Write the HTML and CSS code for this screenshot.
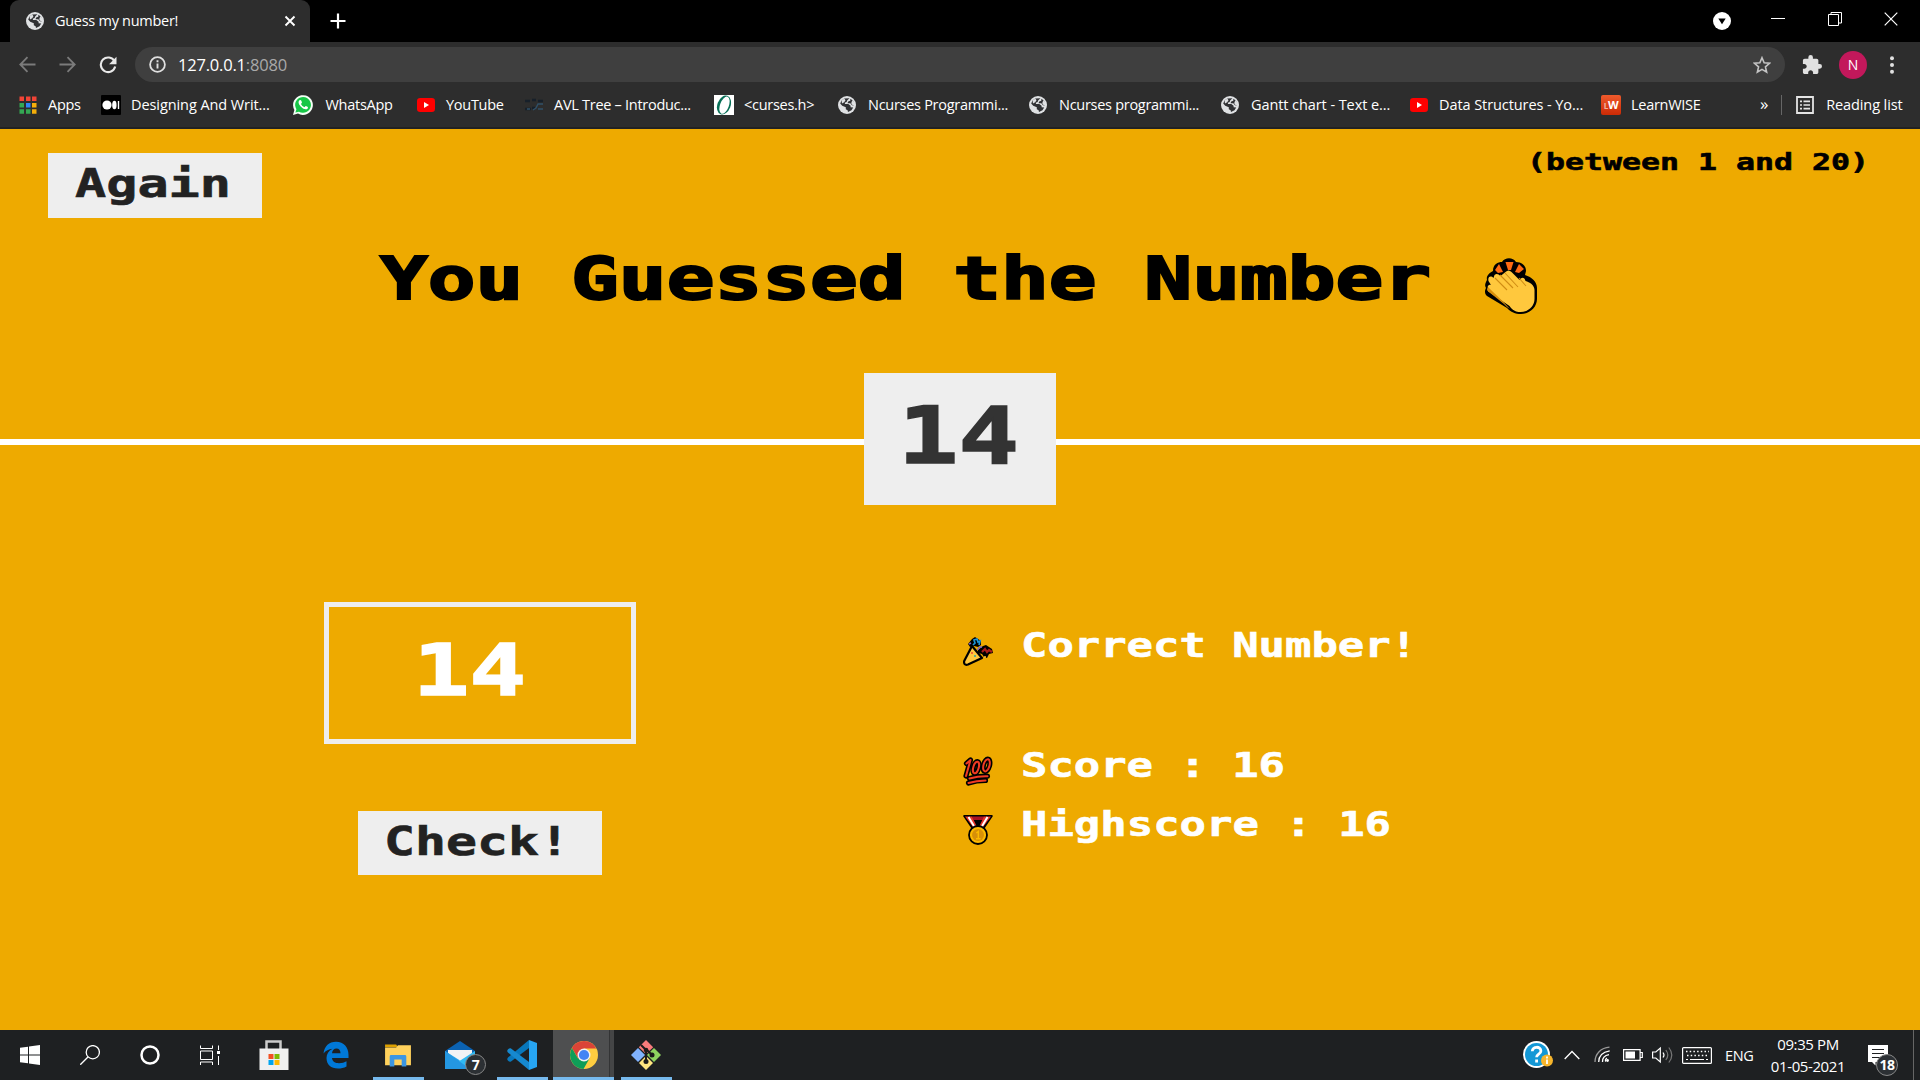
FILE: index.html
```html
<!DOCTYPE html>
<html lang="en">
<head>
<meta charset="utf-8">
<title>Guess my number!</title>
<link rel="stylesheet" href="styles.css">
</head>
<body>
<svg class="defs" width="0" height="0" aria-hidden="true">
  <symbol id="globe" viewBox="0 0 18 18"><circle cx="9" cy="9" r="9" fill="#dfe1e3"/><path d="M6.300 2.600L11.500 2.200 9.300 4.300 8.600 6 6.800 6.700 7 8H10.300L12.600 9.800V11.300L15.200 11.600 13.500 14.300 10 16 9.600 14.300 7.800 13.300V11.200L4.200 9.800 2.200 7.500 3.600 4.400z" fill="#303134"/><path d="M3.600 4.400L6.300 2.600 7.500 4.300 6.200 6.200 4 7.500z" fill="#dfe1e3"/><path d="M12.300 2.800C15 4 16.500 7 16 9.800L14 9.200 12.300 7.200H9.500L10.200 5.400 12.300 4.800z" fill="#303134"/><path d="M14.200 4.400L17 7V10L14.800 9.500 13.200 7.300z" fill="#dfe1e3"/></symbol>
  <symbol id="youtube" viewBox="0 0 20 20"><rect x="1" y="3" width="18" height="14" rx="3.200" fill="#f00"/><path d="M8 7v6l5-3z" fill="#fff"/></symbol>
</svg>

<div class="browser">
  <div class="tabstrip">
    <div class="tab">
      <svg width="18" height="18"><use href="#globe"/></svg>
      <span class="tab-title">Guess my number!</span>
      <svg class="tab-close" width="12" height="12" viewBox="0 0 12 12"><path d="M1.500 1.500l9 9M10.500 1.500l-9 9" stroke="#fff" stroke-width="1.900"/></svg>
    </div>
    <svg class="new-tab" width="16" height="16" viewBox="0 0 16 16"><path d="M8 .5v15M.5 8h15" stroke="#fff" stroke-width="2.200"/></svg>
    <div class="window-controls">
      <svg width="18" height="18" viewBox="0 0 18 18"><circle cx="9" cy="9" r="9" fill="#fff"/><path d="M5.300 6.500h7.400L9 12.200z" fill="#000"/></svg>
      <svg width="14" height="14" viewBox="0 0 14 14"><path d="M0 6.500h14" stroke="#fff"/></svg>
      <svg width="14" height="14" viewBox="0 0 14 14" fill="none" stroke="#fff"><path d="M.5 2.500h10v11H.5zM3 2.500V.5h10.500v10.500H11"/></svg>
      <svg width="14" height="14" viewBox="0 0 14 14"><path d="M.7.7l12.600 12.600M13.300.7.7 13.300" stroke="#fff" stroke-width="1.200"/></svg>
    </div>
  </div>

  <div class="toolbar">
    <svg width="17" height="17" viewBox="0 0 17 17" fill="none" stroke="#7b7b7b" stroke-width="1.800"><path d="M16.500 8.500H1.500M8.500 1.200 1.300 8.500l7.200 7.300"/></svg>
    <svg width="17" height="17" viewBox="0 0 17 17" fill="none" stroke="#7b7b7b" stroke-width="1.800"><path d="M.5 8.500h15M8.500 1.200l7.200 7.300-7.200 7.300"/></svg>
    <svg width="18" height="18" viewBox="0 0 18 18"><path d="M15.500 5.200A7.300 7.300 0 1 0 16.200 10.500" fill="none" stroke="#e8e8e8" stroke-width="2.100"/><path d="M17.500.8v7.400h-7.400z" fill="#e8e8e8"/></svg>
    <div class="omnibox">
      <svg width="17" height="17" viewBox="0 0 17 17"><circle cx="8.500" cy="8.500" r="7.400" fill="none" stroke="#e0e0e0" stroke-width="1.800"/><path d="M8.500 7.600v5M8.500 4.300v2" stroke="#e0e0e0" stroke-width="1.900"/></svg>
      <span class="address">127.0.0.1<span class="port">:8080</span></span>
      <svg class="star" width="18" height="18" viewBox="0 0 18 18"><path d="M9 1.700l2.150 5.100 5.350.45-4.050 3.600 1.200 5.350L9 13.400l-4.650 2.800 1.200-5.350L1.500 7.250l5.350-.45z" fill="none" stroke="#c4c4c4" stroke-width="1.600"/></svg>
    </div>
    <svg class="puzzle" width="20" height="20" viewBox="1 1 22 22"><path fill="#e0e0e0" d="M20.500 11H19V7c0-1.100-.9-2-2-2h-4V3.500a2.500 2.500 0 0 0-5 0V5H4c-1.100 0-1.990.9-1.990 2v3.800H3.500c1.490 0 2.700 1.210 2.700 2.700s-1.210 2.700-2.700 2.700H2V20c0 1.100.9 2 2 2h3.800v-1.500c0-1.490 1.210-2.700 2.700-2.700s2.700 1.210 2.700 2.700V22H17c1.100 0 2-.9 2-2v-4h1.500a2.500 2.500 0 0 0 0-5z"/></svg>
    <span class="avatar">N</span>
    <svg width="4" height="18" viewBox="0 0 4 18" fill="#e0e0e0"><circle cx="2" cy="2.200" r="2"/><circle cx="2" cy="9" r="2"/><circle cx="2" cy="15.800" r="2"/></svg>
  </div>

  <div class="bookmarks">
    <div class="bookmark-list">
      <div class="bookmark"><svg width="20" height="20" viewBox="0 0 20 20"><g fill="#f14436"><path d="M1.500 1.500h4.500v4.500H1.500zM8 1.500h4.500v4.500H8zM14 1.500h4.500v4.500H14z"/></g><path d="M1.500 8h4.500v4.500H1.500zM1.500 14.200h4.500v4.500H1.500zM8 14.200h4.500v4.500H8z" fill="#34a853"/><path d="M8 8h4.500v4.500H8z" fill="#2f85f7"/><path d="M14 8h4.500v4.500H14zM14 14.200h4.500v4.500H14z" fill="#f5ae0a"/></svg><span>Apps</span></div>
      <div class="bookmark wide"><svg width="20" height="20" viewBox="0 0 20 20"><rect width="20" height="20" rx="1" fill="#000"/><circle cx="6" cy="10" r="4.600" fill="#fff"/><ellipse cx="13.400" cy="10" rx="2.200" ry="4.300" fill="#fff"/><path d="M17.500 6v8" stroke="#fff" stroke-width="1.400"/></svg><span>Designing And Writ...</span></div>
      <div class="bookmark whatsapp"><svg width="20" height="20" viewBox="0 0 20 20"><path d="M0 20l1.400-5A9.900 9.900 0 1 1 5 18.600z" fill="#f4fff6"/><path d="M2.400 17.600l1-3.400A7.900 7.900 0 1 1 6 16.700z" fill="#16c746"/><path d="M6.500 5.300c-2 1.700-.4 4.600 1.800 6.800s5 3 6.400 1.300c.7-1.200.2-1.500-2-2.400l-1.300 1.200C9.700 11.500 8.800 10.500 8 9l1-1.400C8.200 5 7.700 4.800 6.500 5.300z" fill="#fff"/></svg><span>WhatsApp</span></div>
      <div class="bookmark"><svg width="20" height="20"><use href="#youtube"/></svg><span>YouTube</span></div>
      <div class="bookmark"><svg width="20" height="20" viewBox="0 0 20 20" fill="none"><path d="M1 6h5m2-1h4m2 1h5M1 14h6m1-1h3" stroke="#17202a" stroke-width="2.500"/><path d="M19 9h-5l-2 4-3 2M3 14h3M14 14h5" stroke="#305068" stroke-width="1.400"/></svg><span>AVL Tree – Introduc...</span></div>
      <div class="bookmark"><svg width="20" height="20" viewBox="0 0 20 20"><path d="M0 0h20v20H0z" fill="#fff"/><ellipse cx="10" cy="10" rx="6.600" ry="9.800" transform="rotate(20 10 10)" fill="#087057"/><ellipse cx="10.500" cy="10" rx="4.400" ry="9" transform="rotate(20 10 10)" fill="#fff"/></svg><span>&lt;curses.h&gt;</span></div>
      <div class="bookmark"><svg width="20" height="18" viewBox="0 0 20 18"><use href="#globe" width="18" height="18"/></svg><span>Ncurses Programmi...</span></div>
      <div class="bookmark"><svg width="20" height="18" viewBox="0 0 20 18"><use href="#globe" width="18" height="18"/></svg><span>Ncurses programmi...</span></div>
      <div class="bookmark wide"><svg width="20" height="18" viewBox="0 0 20 18"><use href="#globe" width="18" height="18"/></svg><span>Gantt chart - Text e...</span></div>
      <div class="bookmark wide"><svg width="20" height="20"><use href="#youtube"/></svg><span>Data Structures - Yo...</span></div>
      <div class="bookmark"><span class="lw-icon"><i>L</i>W</span><span>LearnWISE</span></div>
    </div>
    <span class="overflow">»</span>
    <div class="reading-list">
      <svg width="18" height="18" viewBox="0 0 18 18" fill="none" stroke="#e4e4e4"><path d="M1 1h16v16H1z" stroke-width="1.800"/><path d="M4 5.300h2M4 9h2M4 12.700h2M7.500 5.300H14M7.500 9H14M7.500 12.700H14" stroke-width="1.700"/></svg>
      <span>Reading list</span>
    </div>
  </div>
</div>

<div class="game">
  <header class="game-header">
    <div class="top-row">
      <div class="button again"><svg class="pixel" width="156" height="28"><text y="28" font-size="38.400" textLength="156" lengthAdjust="spacingAndGlyphs">Again</text></svg></div>
      <svg class="pixel between" width="342" height="17"><text y="17" font-size="23.300" textLength="342" lengthAdjust="spacingAndGlyphs">(between 1 and 20)</text></svg>
    </div>
    <div class="title-row">
      <svg class="pixel title" width="1051" height="44"><text y="44" font-size="59" textLength="1051" lengthAdjust="spacingAndGlyphs">You Guessed the Number</text></svg>
      <svg class="clap" width="54" height="56" viewBox="0 0 54 56"><path d="M8 13C8 6 13 4 17 4c3-5 11-5 14 0 5 0 10 3 10 9l-1 4c7 2 12 7 12 13v11c0 8-7 15-16 15-6 0-10-2-14-6L2 38c-3-3-2-6-1-8-2-3 0-6 1-8-1-4 2-7 6-9z" fill="#000"/><path d="M10 12l4-6 4 8-5 1zM20.500 4h8L26 12h-3zM39 11l-5-5-4 8 4 1z" fill="#ff6a13"/><path d="M3 30c-1-2 1-4 3-3L3.500 23c-1-4 2-6 5-3l1-3c2-2 4-1 6 1l5-4c2-2 4-2 6 0l8 8c2-3 5-3 6 1 4 1 9 4 9 9v9c0 7-6 13-14 13-5 0-8-2-11-6L4 34c-2-1-2-3-1-4z" fill="#ffc83d"/><path d="M3 29c9 9 16 15 22 22-2-1-4-3-6-5L4 34c-2-1-2-4-1-5z" fill="#d98f0a"/><path d="M10 20l12 12M15 17l13 13M20 15l13 14M34 20l7 8" fill="none" stroke="#d08d14" stroke-width="1.100"/></svg>
    </div>
    <div class="secret"><svg class="pixel" width="121" height="57"><text y="57" font-size="77.500" textLength="121" lengthAdjust="spacingAndGlyphs">14</text></svg></div>
  </header>
  <main class="game-main">
    <section class="left">
      <div class="guess"><svg class="pixel" width="113" height="52"><text y="52" font-size="70.600" textLength="113" lengthAdjust="spacingAndGlyphs">14</text></svg></div>
      <div class="button check"><svg class="pixel" width="186" height="28"><text y="28" font-size="38.400" textLength="186" lengthAdjust="spacingAndGlyphs">Check!</text></svg></div>
    </section>
    <section class="right">
      <div class="stat message">
        <svg width="30" height="30" viewBox="0 0 30 30"><path d="M9 10L1.200 25c-.6 3 1 4.500 3.800 3.400L19 22z" fill="#ffc83d" stroke="#000" stroke-width="2.200" stroke-linejoin="round"/><path d="M5 8l4-5 3-2 3 2 3 2v4l-3 2-4-1-4 1zM15 14l5-4 3-1 6 4 1 4-4 1-2 4-3-1-2-3-4-1z" fill="#000"/><path d="M10 9l2-2-1-3 3-1 1 3 2-1-1 4" fill="none" stroke="#1d95d8" stroke-width="1.700"/><path d="M19 16l3-3 2 3 2-2 3 2" fill="none" stroke="#a91c1c" stroke-width="2.200"/><path d="M6 8l2-1M15 14c0-2 2-3 4-3" stroke="#7864c8" stroke-width="1.500" fill="none"/><circle cx="9" cy="17" r="1" fill="#ed4a36"/><circle cx="12" cy="20" r="1" fill="#2ba5a5"/><circle cx="22" cy="21" r="1" fill="#ffc83d"/></svg>
        <svg class="pixel" width="396" height="24"><text y="24" font-size="33" textLength="396" lengthAdjust="spacingAndGlyphs">Correct Number!</text></svg>
      </div>
      <div class="stat">
        <svg width="30" height="30" viewBox="0 0 30 30" fill="none" stroke-linecap="round" stroke-linejoin="round"><g stroke="#000" stroke-width="5.200"><path d="M3.500 7.500L7.500 4 3 20M6.500 22.500c7-2 12-2.500 18-2.300M5.500 27c6-2 11-2.600 17-2.600"/><ellipse cx="13" cy="11.500" rx="2.700" ry="6" transform="rotate(16 13 11.500)"/><ellipse cx="23.500" cy="9.300" rx="3" ry="6.300" transform="rotate(16 23.500 9.300)"/></g><g stroke="#f03a24" stroke-width="2"><path d="M3.500 7.500L7.500 4 3 20M6.500 22.500c7-2 12-2.500 18-2.300M5.500 27c6-2 11-2.600 17-2.600"/><ellipse cx="13" cy="11.500" rx="2.700" ry="6" transform="rotate(16 13 11.500)"/><ellipse cx="23.500" cy="9.300" rx="3" ry="6.300" transform="rotate(16 23.500 9.300)"/></g></svg>
        <svg class="pixel" width="264" height="24"><text y="24" font-size="33" textLength="264" lengthAdjust="spacingAndGlyphs">Score : 16</text></svg>
      </div>
      <div class="stat highscore">
        <svg width="30" height="30" viewBox="0 0 30 30"><path d="M1.200 1h27.600L20 14H10z" fill="#000" stroke="#000" stroke-width="2" stroke-linejoin="round"/><path d="M9 1.500h12V5H10.500z" fill="#a90f23"/><path d="M2 1.500h7L14 12h-4zM28 1.500h-7L16 12h4z" fill="#e63329"/><path d="M5.500 2l6 10M24.500 2l-6 10" stroke="#fff" stroke-width="2"/><circle cx="15" cy="20" r="9" fill="#fcb900" stroke="#000" stroke-width="1.800"/><circle cx="15" cy="20" r="6" fill="#d79008"/><path d="M13.300 18l2-1.500v7M13 23.700h4.500" fill="none" stroke="#fcb900" stroke-width="1.400"/></svg>
        <svg class="pixel" width="370" height="24"><text y="24" font-size="33" textLength="370" lengthAdjust="spacingAndGlyphs">Highscore : 16</text></svg>
      </div>
    </section>
  </main>
</div>

<div class="taskbar">
  <div class="launchers">
    <div class="task"><svg width="20" height="20" viewBox="0 0 20 20" fill="#fff"><path d="M0 2.800l8-1.100v7.800H0zM9 1.500L20 0v9.500H9zM0 10.500h8v7.800l-8-1.100zM9 10.500h11V20L9 18.500z"/></svg></div>
    <div class="task"><svg width="20" height="20" viewBox="0 0 20 20" fill="none" stroke="#fff" stroke-width="1.300"><circle cx="12.800" cy="7.200" r="6.600"/><path d="M8.200 11.800L.3 19.700"/></svg></div>
    <div class="task"><svg width="20" height="20" viewBox="0 0 20 20"><circle cx="10" cy="10" r="8.500" fill="none" stroke="#fff" stroke-width="2.500"/></svg></div>
    <div class="task"><svg width="20" height="20" viewBox="0 0 20 20" fill="none" stroke="#fff"><path d="M.5.500V3.500h12V.5M.5 6h12v8.500H.5zM.5 20v-3h12v3M18.500.5V5M18.500 11v9"/><path d="M17 6h3v3h-3z" fill="#fff" stroke="none"/></svg></div>
    <div class="task app"><svg width="30" height="30" viewBox="0 0 30 30"><path d="M7.500 9V1.500h14V9" fill="none" stroke="#ccc" stroke-width="2.500"/><path d="M.5 8.500h29V30H.5z" fill="#f0f0f0"/><path d="M9.500 14h5v5h-5z" fill="#f25022"/><path d="M15.500 14h5v5h-5z" fill="#7fba00"/><path d="M9.500 20h5v5h-5z" fill="#00a4ef"/><path d="M15.500 20h5v5h-5z" fill="#ffb900"/></svg></div>
    <div class="task app"><svg width="26" height="28" viewBox="0 0 26 28"><path d="M.5 12.500C1.500 5 6 .8 13 .8c8 0 12.500 5.700 12.500 13V17H9c.3 3.500 3.200 5.200 7 5.200 3 0 5.500-.8 7.500-2v5.300c-2.600 1.500-5.500 2-8.500 2C8 27.500 3.500 23.500 3.500 17c0-4 2-7.300 6-9.300C5.800 8 2.700 9.500.5 12.500zM9 12.300h8.500c0-3-1.500-4.700-4-4.700-2.500 0-4.200 2-4.500 4.700z" fill="#0078d7"/></svg></div>
    <div class="task app running"><svg width="28" height="24" viewBox="0 0 30 26"><path d="M1 1.500h12l2 3H1z" fill="#dda000"/><path d="M1 5h12l2-2.500h14V24H1z" fill="#ffd15c"/><path d="M6 25.500V14.500q0-1.500 1.500-1.500h15q1.500 0 1.500 1.500v11h-5V18h-8v7.500z" fill="#3b96e2"/></svg></div>
    <div class="task app mail"><svg width="30" height="28" viewBox="0 0 30 28"><path d="M0 10L15 0l15 10v5H0z" fill="#0b62b2"/><path d="M3 9h24v12H3z" fill="#f2f3f5"/><path d="M0 10l15 9.500L0 28z" fill="#29a9ed"/><path d="M30 10v18H0l16-9z" fill="#30baf4"/><path d="M0 10l25 18H0z" fill="#2497e2"/></svg><b class="badge">7</b></div>
    <div class="task app running"><svg width="30" height="30" viewBox="0 0 30 30"><path d="M22 0l8 3v24l-8 3z" fill="#27a5f2"/><path d="M22 0v8L4 21.500c-1 .7-2.500 0-3.500-1.500-.6-1 0-2 .5-2.500z" fill="#0877bb"/><path d="M22 30v-8L4 8.500C3 7.800 1.500 8.500.5 10c-.6 1 0 2 .5 2.500z" fill="#1689cf"/></svg></div>
    <div class="task app running active"><svg width="28" height="28" viewBox="0 0 28 28"><circle cx="14" cy="14" r="14" fill="#ffcd40"/><path d="M14 7.500h12.300A14 14 0 0 0 1.900 7L8.500 18z" fill="#db4437"/><path d="M1.900 7A14 14 0 0 0 13.500 28l6-10.500H8z" fill="#0f9d58"/><circle cx="14" cy="14" r="6.500" fill="#f1f1f1"/><circle cx="14" cy="14" r="5.100" fill="#4285f4"/></svg></div>
    <div class="task app running"><svg width="30" height="30" viewBox="0 0 30 30"><path d="M15 0l7.200 7.200L15 14 7.800 7.200z" fill="#f87b7b"/><path d="M7 8l7 7-7 7-7-7z" fill="#80b3ff"/><path d="M23 8l7 7-7 7-7-7z" fill="#8dd35f"/><path d="M15 16l7 7-7 7-7-7z" fill="#ffe680"/><path d="M10 5l5 5v11M15 9l6 6" fill="none" stroke="#1b1b1b" stroke-width="2"/><circle cx="15" cy="10" r="2.300" fill="#1b1b1b"/><circle cx="21" cy="15" r="2.500" fill="#1b1b1b"/><circle cx="15" cy="21.500" r="2.500" fill="#1b1b1b"/></svg></div>
  </div>
  <div class="tray">
    <svg class="help" width="30" height="28" viewBox="0 0 30 28"><circle cx="13.500" cy="13.500" r="13.500" fill="#fff"/><circle cx="13.500" cy="13.500" r="11.500" fill="#1498d6"/><path d="M9.300 10.300c0-5.300 8.600-5.300 8.600-.4 0 3.300-4.300 3.300-4.300 6.300M13.600 18.500v3" fill="none" stroke="#fff" stroke-width="2.800"/><circle cx="24" cy="19.500" r="6" fill="#f7b52c"/><path d="M24 18.500v4.500M24 15.500v2" stroke="#fff" stroke-width="1.800"/></svg>
    <svg class="chevron" width="16" height="10" viewBox="0 0 16 10"><path d="M.7 9L8 1.500 15.300 9" fill="none" stroke="#fff" stroke-width="1.300"/></svg>
    <svg class="wifi" width="18" height="18" viewBox="0 0 18 18" fill="none" stroke="#fff" stroke-width="1.300"><path d="M12 15.500c-1-.5-.8-2.500 1-3.300M8.500 16c-.2-4 2-6.500 6.500-7.300M4.700 16c0-5.500 3.500-10 11-11.200" /><path d="M1 16C1 8 7 1.700 15.500 1.200" stroke="#999"/><circle cx="13.500" cy="14.500" r="1.400" fill="#fff" stroke="none"/></svg>
    <svg class="battery" width="20" height="12" viewBox="0 0 20 12"><path d="M.6.6h16.500v10.800H.6zM17.500 3.500h1.800v5h-1.800" fill="none" stroke="#fff" stroke-width="1.200"/><path d="M2.500 2.500H12v7H2.500z" fill="#fff"/></svg>
    <svg class="speaker" width="21" height="18" viewBox="0 0 21 18" fill="none" stroke="#fff" stroke-width="1.200"><path d="M.6 6h3.200l4.500-4v14l-4.500-4H.6z"/><path d="M11 6.500q2 2.500 0 5"/><path d="M13.800 4q4 5 0 10M16.800 1.500q6 7.500 0 15" stroke="#777"/></svg>
    <svg class="keyboard" width="30" height="17" viewBox="0 0 30 17" fill="none" stroke="#fff"><rect x=".6" y=".6" width="28.800" height="15.800" rx="1" stroke-width="1.200"/><path d="M4 4.500h23M5 8.500h22" stroke-dasharray="1.500 2.200" stroke-width="1.500"/><path d="M4 12.500h2M8 12.500h14M24 12.500h2"/></svg>
    <span class="lang">ENG</span>
    <div class="clock"><span>09:35 PM</span><span>01-05-2021</span></div>
    <div class="action"><svg width="21" height="21" viewBox="0 0 21 21"><path d="M0 0h20v17H7.500v3.500L4 17H0z" fill="#fff"/><path d="M4 4.500h12M4 8.500h12M4 12.500h8" stroke="#1e2022" stroke-width="1.200"/></svg><b class="badge">18</b></div>
  </div>
</div>
</body>
</html>
```
FILE: styles.css
```css
* { box-sizing: border-box; }
body {
  margin: 0;
  width: 1920px;
  height: 1080px;
  overflow: hidden;
  display: flex;
  flex-direction: column;
  background: #eeaa00;
  font-family: "Open Sans", "Noto Sans", sans-serif;
  color: #fff;
}
svg { display: block; flex: none; }
.defs { position: absolute; }

/* browser chrome */
.browser { height: 129px; background: #2d2d2d; border-bottom: 2px solid #222; font-size: 14.5px; letter-spacing: -.28px; white-space: nowrap; }
.tabstrip { height: 42px; background: #000; display: flex; padding-left: 10px; }
.tab { width: 300px; height: 42px; padding: 0 14px 0 16px; display: flex; align-items: center; background: #2d2d2d; border-radius: 9px 9px 0 0; }
.tab-title { margin-left: 11px; flex: 1; line-height: 20px; padding-bottom: 1px; }
.new-tab { margin: 13px 0 0 20px; }
.window-controls { margin-left: auto; padding: 0 22px 0 0; display: flex; align-items: center; height: 37px; gap: 42.500px; }
.window-controls svg:first-child { margin-top: 5px; margin-right: -2px; }
.toolbar { height: 45px; display: flex; align-items: center; padding: 0 26px 0 19px; }
.toolbar > svg:nth-child(2) { margin-left: 23px; }
.toolbar > svg:nth-child(3) { margin-left: 23px; }
.omnibox { margin-left: 18px; width: 1650px; height: 35px; border-radius: 18px; background: #3f3f3f; display: flex; align-items: center; padding: 0 14px 0 14px; }
.address { margin-left: 12px; flex: 1; font-size: 16.5px; letter-spacing: -.2px; }
.port { color: #a9a9a9; }
.puzzle { margin-left: 17px; }
.avatar { margin-left: 17px; margin-right: auto; width: 28px; height: 28px; border-radius: 50%; background: #c2185b; text-align: center; line-height: 28px; font-size: 14px; }
.bookmarks { height: 36px; display: flex; align-items: center; padding: 0 18px; }
.bookmark-list { display: grid; grid-template-columns: 83px 193px 122px 108px 190px 124px 191px 192px 188px 192px 159px; }
.bookmark { display: flex; align-items: center; gap: 10px; height: 22px; }
.bookmark span, .reading-list span { line-height: 20px; padding-bottom: 1px; }
.wide { letter-spacing: -.08px; }
.whatsapp { gap: 12.5px; }
.whatsapp svg { margin-left: -1px; }
.bookmark .lw-icon { width: 20px; height: 20px; padding: 0; border-radius: 2px; background: linear-gradient(#ee5a2c, #cc2a05); font-size: 11px; font-weight: 700; line-height: 20px; text-align: center; }
.lw-icon i { font-size: 8px; opacity: .6; font-style: normal; }
.overflow { font-size: 17px; line-height: 20px; padding-bottom: 2px; }
.reading-list { margin-left: 13px; height: 20px; border-left: 1px solid #666; padding-left: 14px; display: flex; align-items: center; gap: 12px; letter-spacing: -.1px; }

/* game */
.game { height: 901px; }
.pixel { overflow: visible; font-family: "DejaVu Sans Mono", monospace; font-weight: 700; fill: currentColor; stroke: currentColor; stroke-width: .6px; }
.game-header { position: relative; height: 316px; border-bottom: 6px solid #fff; color: #000; }
.top-row { display: flex; justify-content: space-between; padding: 23px 51px 0 48px; }
.button { background: #eee; color: #222; }
.again { margin-top: 1px; width: 214px; height: 65px; padding: 16px 0 0 27px; }
.between { margin-top: .5px; }
.title-row { display: flex; padding: 37px 0 0 380px; }
.title { stroke-width: 2px; }
.clap { margin: 3px 0 0 54px; }
.secret { position: absolute; left: 864px; top: 244px; width: 192px; height: 132px; background: #eee; color: #333; padding: 33px 34px; }
.secret .pixel, .guess .pixel { stroke-width: 1.5px; }
.game-main { display: grid; grid-template-columns: 960px 960px; }
.left { display: flex; flex-direction: column; align-items: center; padding-top: 157px; }
.guess { width: 312px; height: 142px; border: 5px solid #eee; padding: 36px 0 0 84px; }
.check { margin-top: 67px; width: 244px; height: 64px; padding: 16px 0 0 26px; }
.right { padding: 188px 0 0 3px; }
.stat { display: flex; align-items: flex-start; gap: 28px; height: 33px; }
.stat svg:first-child { margin-top: 3px; }
.message { margin-bottom: 87px; }
.highscore { margin-top: 26px; }

/* taskbar */
.taskbar { height: 50px; background: #1e2022; display: flex; justify-content: space-between; }
.launchers { display: flex; }
.task { width: 60px; height: 50px; display: flex; align-items: center; justify-content: center; position: relative; }
.app { width: 62px; }
.app:nth-child(5) { width: 65px; padding-left: 2px; }
.app:nth-child(7) { padding-right: 1px; }
.running { background: linear-gradient(#76b9ed, #76b9ed) 50% 100% / 51px 3px no-repeat; }
.active { background: linear-gradient(#76b9ed, #76b9ed) 0 100% / 61px 3px no-repeat, linear-gradient(90deg, #4e4f50 56px, #333435 56px, #333435 57px, #444546 57px, #444546 61px, transparent 61px); }
.active { padding-right: 1px; }
.badge { position: absolute; width: 21px; height: 21px; border: 1px solid #888; border-radius: 50%; background: #2c3034; font-size: 14px; line-height: 19px; text-align: center; letter-spacing: -.5px; }
.mail .badge { left: 36px; top: 24px; }
.tray { width: 397px; display: flex; align-items: center; }
.chevron { margin-left: 11px; }
.wifi { margin-left: 14px; }
.battery { margin-left: 11px; }
.speaker { margin-left: 9px; }
.keyboard { margin-left: 9px; }
.lang { margin-left: 13px; width: 30px; font-size: 14.5px; letter-spacing: -.3px; }
.clock { width: 78px; margin-left: 14px; display: flex; flex-direction: column; text-align: center; font-size: 15px; line-height: 22.500px; letter-spacing: -.4px; white-space: nowrap; }
.action { position: relative; margin-left: 21px; width: 46px; height: 50px; padding-top: 15px; border-right: 1px solid #666; }
.action .badge { left: 8px; top: 24px; width: 22px; height: 22px; }
```
